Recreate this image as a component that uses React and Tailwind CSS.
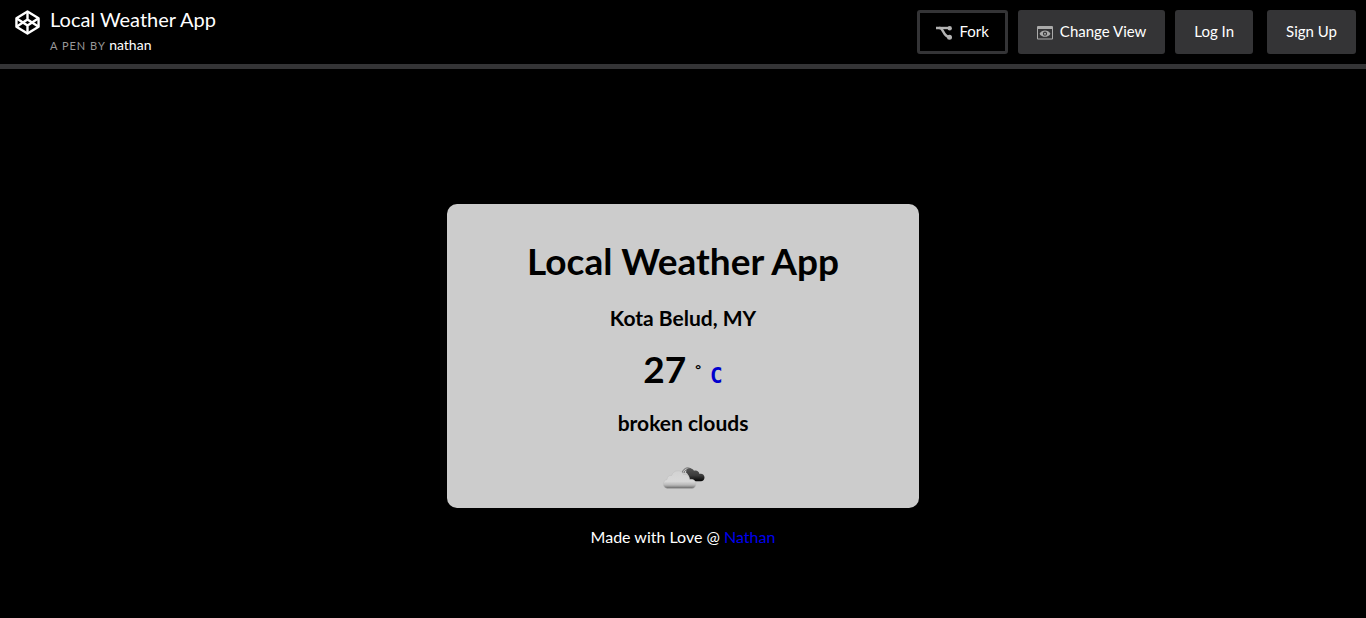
import React from 'react';

function CodePenLogo() {
  return (
    <svg className="h-[25px] w-[25px]" viewBox="0 0 26 26" fill="none" stroke="#fff" strokeWidth="2.5" strokeLinejoin="round" aria-hidden="true">
      <path d="M13 1.500 24.500 8.600v8.800L13 24.500 1.500 17.400V8.600z" />
      <path d="M1.500 8.600 13 16.200l11.500-7.600M1.500 17.400 13 9.800l11.500 7.600M13 1.500v8.300M13 16.200v8.300" />
    </svg>
  );
}

function ForkIcon() {
  return (
    <svg className="mt-1 h-4 w-4" viewBox="0 0 16 16" fill="none" stroke="#b3b3b3" strokeWidth="2.4" aria-hidden="true">
      <path d="M0 3h4C7 3 7.500 11.500 13 12" />
      <path d="M3 3h10" />
      <circle cx="13.700" cy="3.200" r="2.200" fill="#b3b3b3" stroke="none" />
      <circle cx="13.500" cy="12.300" r="2.500" fill="#b3b3b3" stroke="none" />
    </svg>
  );
}

function ViewIcon() {
  return (
    <svg className="mt-1 h-4 w-4" viewBox="0 0 16 16" aria-hidden="true">
      <path fill="#aaa" fillRule="evenodd" d="M1 1h14a1 1 0 0 1 1 1v11.500a1 1 0 0 1-1 1H1a1 1 0 0 1-1-1V2a1 1 0 0 1 1-1zm0 3v9.500h14V4z" />
      <path fill="#aaa" fillRule="evenodd" d="M2.500 8.700c2.500-4.200 8.500-4.200 11 0-2.500 4.200-8.500 4.200-11 0zm5.500-2.100a2.100 2.100 0 1 0 0 4.200 2.100 2.100 0 0 0 0-4.200z" />
      <circle cx="8" cy="8.700" r="1" fill="#aaa" />
    </svg>
  );
}

function BrokenClouds() {
  return (
    <svg className="h-[50px] w-[50px]" viewBox="0 0 50 50" role="img" aria-label="broken clouds">
      <defs>
        <linearGradient id="dark" x1="0" y1="0" x2="0" y2="1">
          <stop offset="0" stopColor="#555" />
          <stop offset="0.55" stopColor="#3c3c3c" />
          <stop offset="1" stopColor="#050505" />
        </linearGradient>
        <linearGradient id="light" x1="0" y1="0" x2="0" y2="1">
          <stop offset="0" stopColor="#d2d2d2" />
          <stop offset="0.6" stopColor="#d8d8d8" />
          <stop offset="0.8" stopColor="#b8b8b8" />
          <stop offset="0.92" stopColor="#888" />
          <stop offset="1" stopColor="#5c5c5c" />
        </linearGradient>
      </defs>
      <path d="M24 21.500c1-5 5-7 9-4.500M26 21c.5-2.500 2-3.500 4-3" fill="none" stroke="#666" strokeWidth="1" />
      <path fill="url(#dark)" d="M28.500 18c1-2.600 6.200-2.600 7.500.8 2.200-1 5 .2 5.500 3.200 2.500-.8 5 .8 5 3.500 0 2.200-1.700 3.700-3.500 3.700h-8.500c-2.300 0-3-1.700-3.500-4.200-.4-2-1.500-3.500-3-4.500z" />
      <path fill="url(#light)" stroke="#bcbcbc" strokeWidth="0.500" d="M9.500 36.500c-5.500-.5-5.500-8-.5-9 0-3 2.500-4.600 4.700-4 1.200-6 10.300-6.300 12-.8 3.500-1 6 1.500 5.800 4.800 3.800-.8 6.500 1.500 6.500 4.500 0 2.700-2 4.500-4.500 4.500z" />
    </svg>
  );
}

const filled = 'flex h-11 items-center gap-[7px] rounded-[3px] bg-[#343436] px-[19px] pb-[2px] text-white';

export default function App() {
  return (
    <div className="min-h-screen bg-black">
      <header className="flex items-start justify-between border-b-[5px] border-[#343436] pr-[10px] pl-[15px] font-['Lato',sans-serif] text-[15px] text-white">
        <div className="flex gap-[10px]">
          <a href="#home" aria-label="CodePen" className="pt-[10px]">
            <CodePenLogo />
          </a>
          <div className="pt-[7px]">
            <h1 className="text-xl leading-6">Local Weather App</h1>
            <p className="pt-1 text-[11px] leading-5 tracking-[1px] text-[#999]">
              A PEN BY <a href="#author" className="text-sm leading-5 tracking-normal text-white">nathan</a>
            </p>
          </div>
        </div>
        <nav className="flex gap-[10px] py-[10px]">
          <button type="button" className="flex h-11 items-center gap-[7px] rounded-[3px] border-3 border-[#343436] px-4 pb-[2px]">
            <ForkIcon />
            Fork
          </button>
          <button type="button" className={filled}>
            <ViewIcon />
            Change View
          </button>
          <div className="flex gap-[14px]">
            <button type="button" className={filled}>Log In</button>
            <button type="button" className={filled}>Sign Up</button>
          </div>
        </nav>
      </header>

      <main className="flex flex-col items-center pt-[135px] text-center font-['Trebuchet_MS','Lato',sans-serif]">
        <section className="flex w-full max-w-[472px] flex-col items-center rounded-[10px] bg-[#ccc] pt-[35px] pb-[6px] font-bold text-black">
          <h2 className="text-[37px] leading-[44px]">Local Weather App</h2>
          <p className="pt-[23px] text-[21px] leading-6">Kota Belud, MY</p>
          <p className="flex h-[61px] items-baseline gap-[9px] pt-[17px] leading-[44px]">
            <span className="text-[37px] leading-[44px]">27</span>
            <span className="self-start text-sm leading-[44px]">°</span>
            <button type="button" className="font-['DejaVu_Sans_Mono',monospace] text-[21px] leading-[44px] text-[#0000cd]">C</button>
          </p>
          <p className="pt-5 pb-[17px] text-[21px] leading-6">broken clouds</p>
          <BrokenClouds />
        </section>
        <footer className="pt-[17px] text-base leading-6 text-white">
          Made with Love @ <a href="#nathan" className="text-[#0000ee]">Nathan</a>
        </footer>
      </main>
    </div>
  );
}
